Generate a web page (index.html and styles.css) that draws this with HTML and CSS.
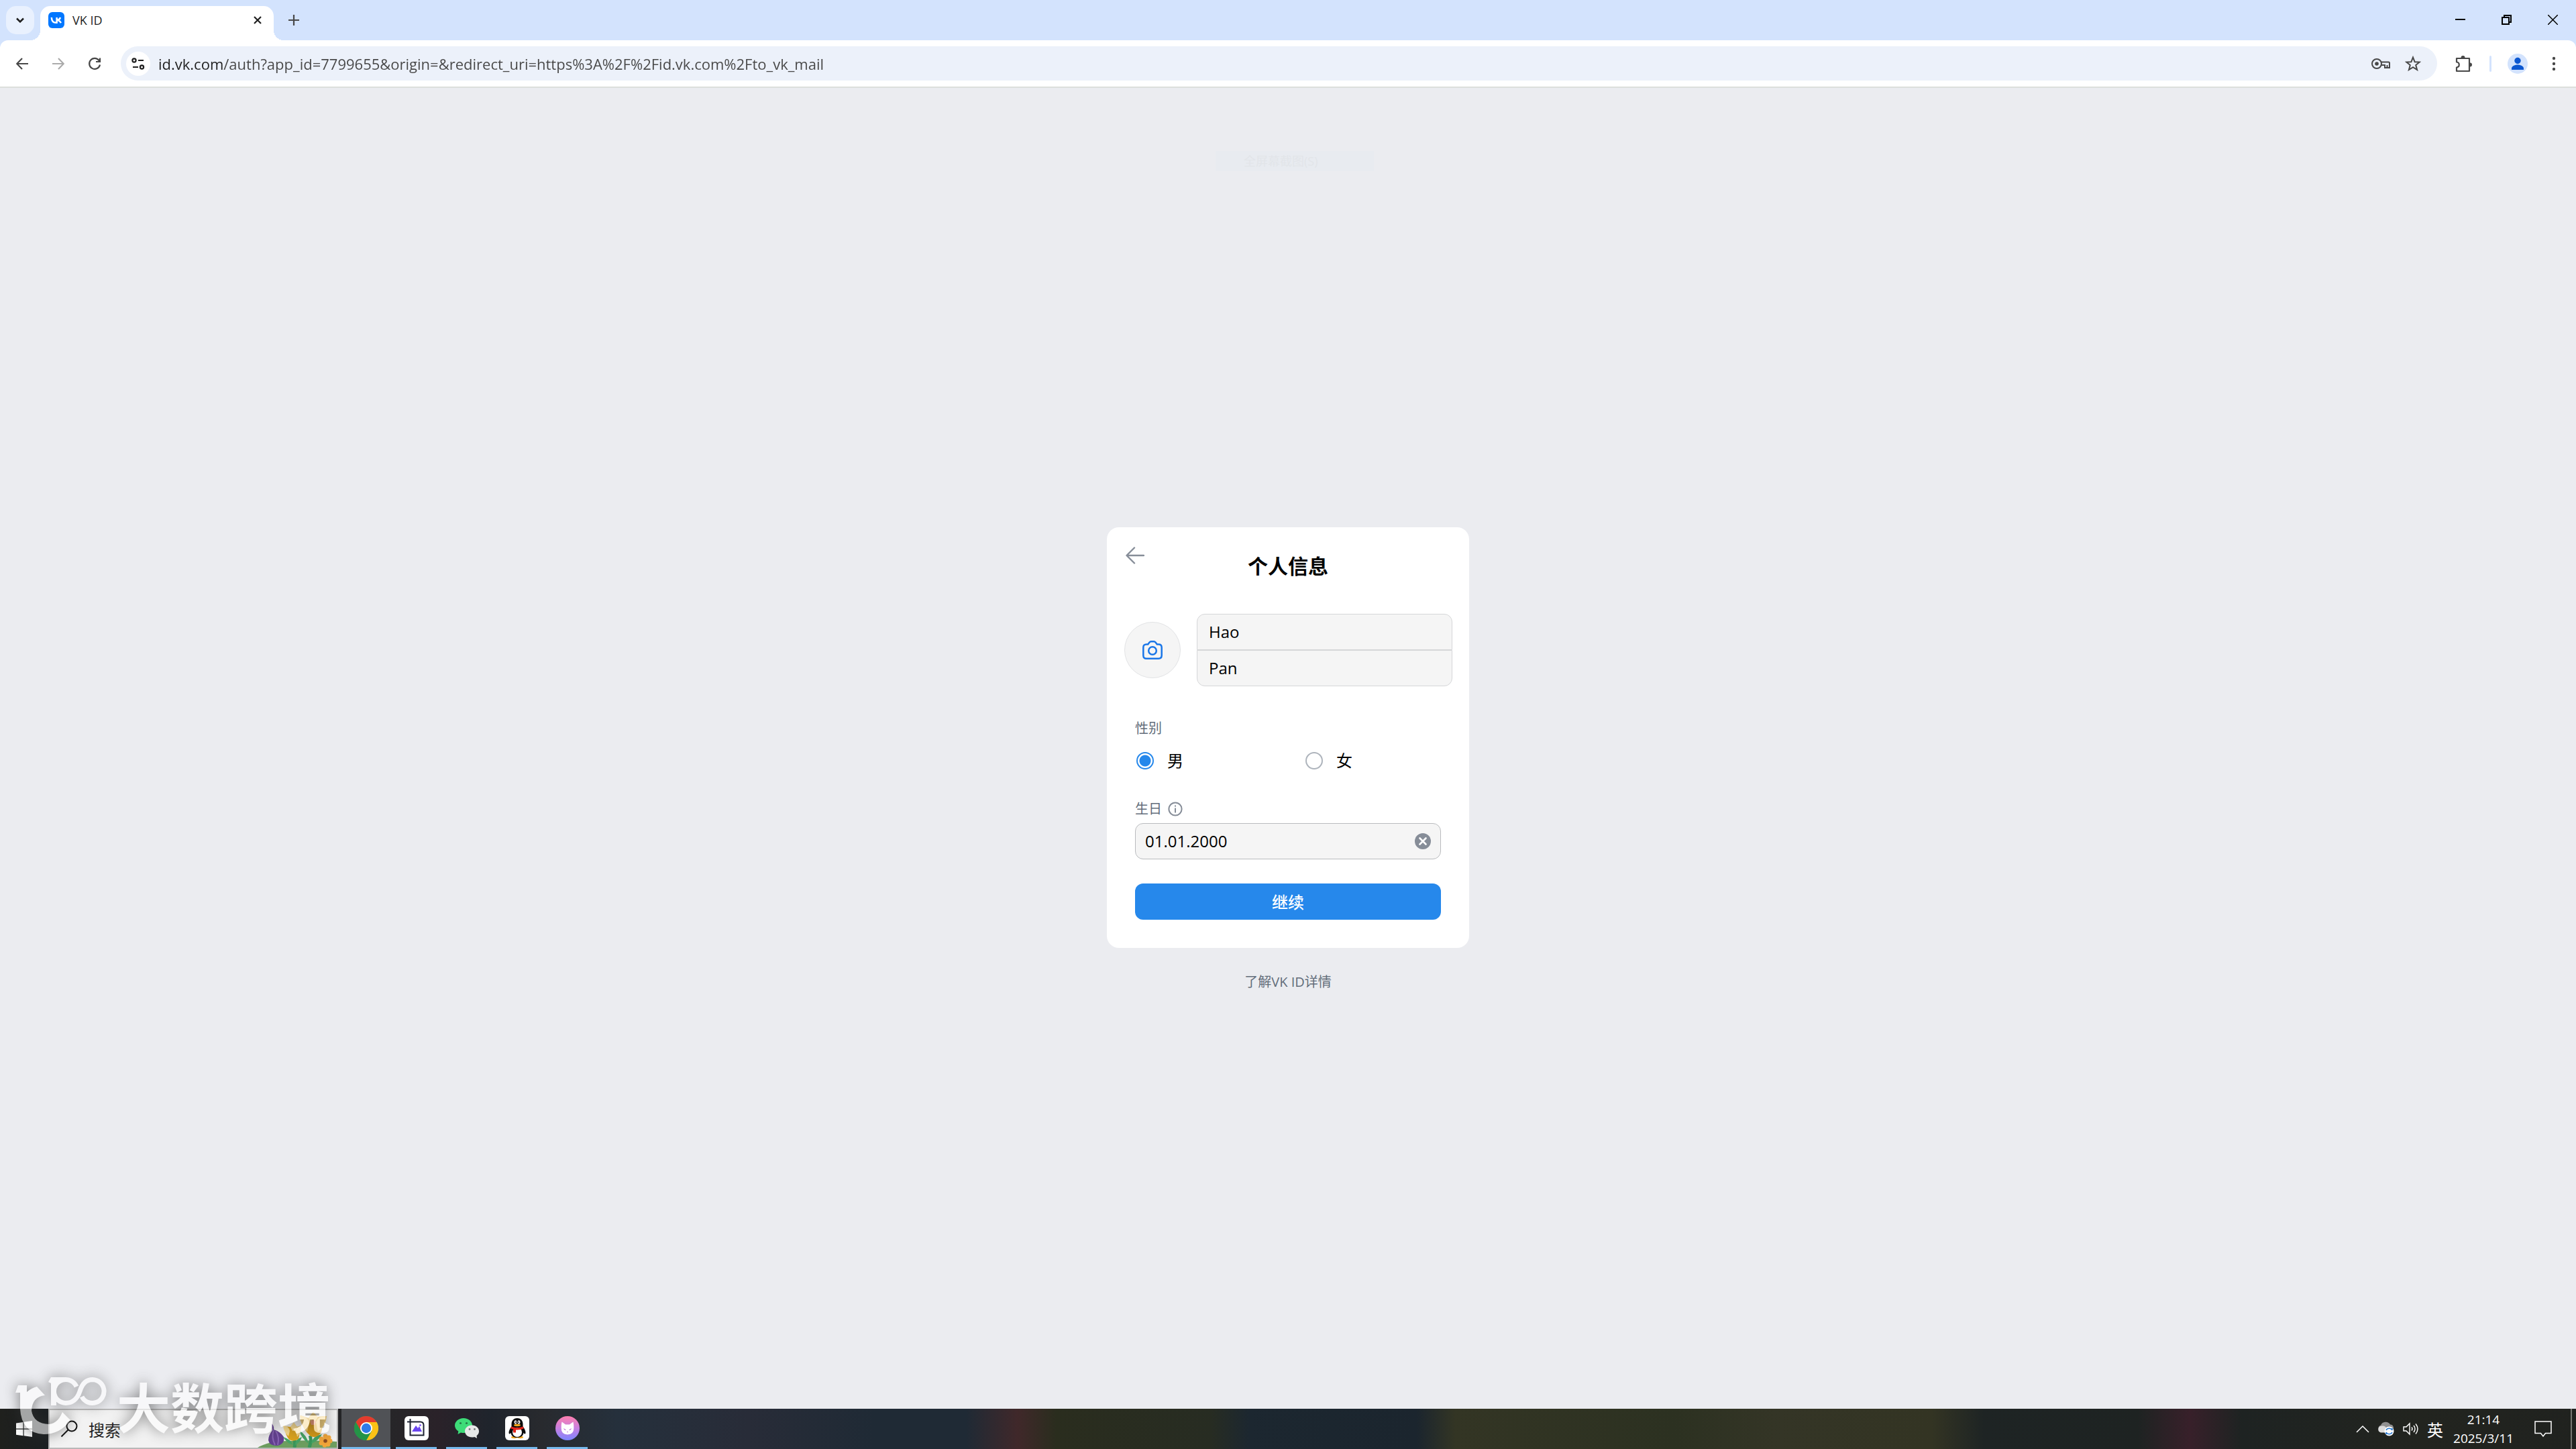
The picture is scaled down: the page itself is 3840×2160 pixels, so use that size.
FILE: index.html
```html
<!DOCTYPE html>
<html lang="zh-CN">

<head>
    <meta charset="UTF-8">
    <meta name="viewport" content="width=device-width, initial-scale=1.0">
    <title>VK ID</title>

    <link rel="stylesheet" href="styles.css">
</head>

<body>
    <!-- browser window -->
    <header class="browser">
        <div class="tabstrip">
            <button class="tab-search" aria-label="搜索标签页">
                <svg width="18" height="18" viewBox="0 0 18 18"><path d="M4 6.500l5 5 5-5" fill="none" stroke="#1f1f1f" stroke-width="2.500"/></svg>
            </button>
            <div class="tab">
                <svg class="favicon" width="24" height="24" viewBox="0 0 24 24">
                    <rect width="24" height="24" rx="6" fill="#07f"/>
                    <path d="M4.800 8c.2 4.800 2.700 7.800 6.600 7.800h1.200V8M12.600 12c3-.2 4.700-1.800 5.400-4M12.600 12c3.200.2 5.200 1.700 6.200 4.300" fill="none" stroke="#fff" stroke-width="2.500"/>
                </svg>
                <span class="tab-title">VK ID</span>
                <button class="icon-btn tab-close" aria-label="关闭">
                    <svg width="18" height="18" viewBox="0 0 18 18"><path d="M4 4l10 10M14 4L4 14" stroke="#1f1f1f" stroke-width="2.200"/></svg>
                </button>
            </div>
            <button class="icon-btn new-tab" aria-label="新标签页">
                <svg width="18" height="18" viewBox="0 0 18 18"><path d="M9 1v16M1 9h16" stroke="#474747" stroke-width="2.200"/></svg>
            </button>
            <div class="window-controls">
                <button class="win-btn" aria-label="最小化"><svg width="15" height="15" viewBox="0 0 15 15"><path d="M0 7h15" stroke="#000" stroke-width="2"/></svg></button>
                <button class="win-btn" aria-label="还原"><svg width="15" height="15" viewBox="0 0 15 15"><path d="M1 4h10v10H1zM4 4V1h10v10h-3" fill="none" stroke="#000" stroke-width="2"/></svg></button>
                <button class="win-btn" aria-label="关闭窗口"><svg width="15" height="15" viewBox="0 0 15 15"><path d="M0 0l15 15M15 0L0 15" stroke="#000" stroke-width="1.500"/></svg></button>
            </div>
        </div>

        <div class="toolbar">
            <button class="icon-btn" aria-label="后退">
                <svg width="18" height="18" viewBox="0 0 18 18"><path d="M18 9H1.500M9 1L1.200 9 9 17" fill="none" stroke="#474747" stroke-width="2.200"/></svg>
            </button>
            <button class="icon-btn" aria-label="前进" disabled>
                <svg width="18" height="18" viewBox="0 0 18 18"><path d="M0 9h16.500M9 1l7.800 8L9 17" fill="none" stroke="#ababab" stroke-width="2.200"/></svg>
            </button>
            <button class="icon-btn" aria-label="重新加载">
                <svg width="20" height="20" viewBox="0 0 20 20"><path d="M18 11.500A8 8 0 1 1 16.500 5L18 7M18 1.500V7h-6" fill="none" stroke="#474747" stroke-width="2.200"/></svg>
            </button>
            <form class="omnibox">
                <button type="button" class="site-info" aria-label="查看网站信息">
                    <svg width="20" height="20" viewBox="0 0 20 20" fill="none" stroke="#1f1f1f" stroke-width="2.200"><circle cx="4" cy="5" r="2.600"/><path d="M10 5h8M2 15h8"/><circle cx="15.500" cy="15" r="2.600"/></svg>
                </button>
                <input class="url" type="text" aria-label="地址" value="id.vk.com/auth?app_id=7799655&amp;origin=&amp;redirect_uri=https%3A%2F%2Fid.vk.com%2Fto_vk_mail">
                <button type="button" class="icon-btn omni-btn" aria-label="密码">
                    <svg width="28" height="18" viewBox="0 0 28 18" fill="none" stroke="#474747" stroke-width="2"><circle cx="8" cy="9" r="7"/><circle cx="8" cy="9" r="2.800" fill="#474747" stroke="none"/><path d="M14.500 6.500H25.500a1.500 1.500 0 0 1 1.500 1.500v7h-7v-4h-5.500M23.500 15v-4"/></svg>
                </button>
                <button type="button" class="icon-btn omni-btn" aria-label="收藏">
                    <svg width="24" height="24" viewBox="0 0 24 24"><path d="M12 2.500l2.600 6.700 7.100.4-5.500 4.500 1.900 7L12 17.200l-6.100 3.900 1.900-7L2.300 9.600l7.100-.4z" fill="none" stroke="#474747" stroke-width="2"/></svg>
                </button>
            </form>
            <button class="icon-btn extensions" aria-label="扩展程序">
                <svg width="26" height="26" viewBox="0 0 26 26"><path d="M3 5h19v19H3v-5.500c5-.5 5-7.500 0-8z" fill="none" stroke="#474747" stroke-width="2.200" stroke-linejoin="round"/><path d="M9.500 4a3 3 0 0 1 6 0zM23 11.500a3 3 0 0 1 0 6z" fill="#474747"/></svg>
            </button>
            <span class="separator"></span>
            <button class="icon-btn" aria-label="个人资料">
                <svg width="30" height="30" viewBox="0 0 30 30"><circle cx="15" cy="15" r="15" fill="#d3e3fd"/><circle cx="15" cy="10.500" r="4.700" fill="#0b57d0"/><path d="M6 24v-2c0-4 6-5.500 9-5.500s9 1.500 9 5.500v2z" fill="#0b57d0"/></svg>
            </button>
            <button class="icon-btn" aria-label="菜单">
                <svg width="6" height="22" viewBox="0 0 6 22" fill="#474747"><circle cx="3" cy="3" r="2.200"/><circle cx="3" cy="11" r="2.200"/><circle cx="3" cy="19" r="2.200"/></svg>
            </button>
        </div>
    </header>

    <!-- page -->
    <main class="page">
        <div class="ghost-menu">全屏幕截图(S)</div>

        <form class="card">
            <div class="card-header">
                <button type="button" class="back" aria-label="返回">
                    <svg width="28" height="26" viewBox="0 0 28 26"><path d="M27 13H2M13 1.500L1.500 13 13 24.500" fill="none" stroke="#868d98" stroke-width="2.400" stroke-linecap="round" stroke-linejoin="round"/></svg>
                </button>
                <h1 class="card-title">个人信息</h1>
            </div>

            <div class="name-row">
                <button type="button" class="avatar" aria-label="上传照片">
                    <svg width="30" height="28" viewBox="0 0 30 28" fill="none" stroke="#1a76e8" stroke-width="2.500"><path d="M6 5.500h2.200L10.500 2.500q1-1.200 2.500-1.200h4q1.500 0 2.500 1.200l2.300 3H24q4.700 0 4.700 4.700v11.800q0 4.700-4.700 4.700H6q-4.700 0-4.700-4.700V10.200Q1.300 5.500 6 5.500z"/><circle cx="15" cy="15" r="5.800"/></svg>
                </button>
                <div class="name-fields">
                    <input class="field" type="text" aria-label="名" value="Hao">
                    <input class="field" type="text" aria-label="姓" value="Pan">
                </div>
            </div>

            <fieldset class="gender">
                <legend class="label">性别</legend>
                <div class="options">
                    <label class="option"><input class="radio" type="radio" name="sex" checked>男</label>
                    <label class="option"><input class="radio" type="radio" name="sex">女</label>
                </div>
            </fieldset>

            <div class="birthday">
                <div class="birthday-label">
                    <label class="label" for="bdate">生日</label>
                    <svg width="22" height="22" viewBox="0 0 22 22"><circle cx="11" cy="11" r="9.600" fill="none" stroke="#868d98" stroke-width="2"/><path d="M11 9.500v7M11 5.500v2" stroke="#868d98" stroke-width="2"/></svg>
                </div>
                <div class="date-box">
                    <input class="date-input" id="bdate" type="text" value="01.01.2000">
                    <button type="button" class="clear" aria-label="清除">
                        <svg width="24" height="24" viewBox="0 0 24 24"><circle cx="12" cy="12" r="12" fill="#868d98"/><path d="M7.500 7.500l9 9M16.500 7.500l-9 9" stroke="#fff" stroke-width="2.600" stroke-linecap="round"/></svg>
                    </button>
                </div>
            </div>

            <button type="submit" class="submit">继续</button>
        </form>

        <a class="about" href="#">了解VK ID详情</a>
    </main>

    <!-- windows taskbar -->
    <footer class="taskbar">
        <button class="start" aria-label="开始">
            <svg width="24" height="24" viewBox="0 0 24 24" fill="#fff"><path d="M0 3.500l10.500-1.500v9.500H0zM11.700 1.800L24 0v11.500H11.700zM0 12.700h10.500v9.500L0 20.700zM11.700 12.700H24V24l-12.300-1.700z"/></svg>
        </button>
        <label class="search">
            <svg width="26" height="26" viewBox="0 0 26 26" fill="none" stroke="#111" stroke-width="2"><circle cx="17" cy="9" r="7.500"/><path d="M11.500 14.500L1.500 24.500"/></svg>
            <input class="search-input" type="text" value="搜索">
            <svg class="flowers" width="120" height="56" viewBox="0 0 120 56">
                <path d="M2 56Q18 46 46 46 86 44 120 47V56z" fill="#6d9e5f"/>
                <path d="M23 20q4 4 3 9 10 3 15 11 2 10-9 13-12 1-14-8 0-7 6-15z" fill="#634090"/>
                <path d="M26 30q-4 10 2 22M29 31q6 9 3 21" fill="none" stroke="#8763b4" stroke-width="2"/>
                <path d="M57 56q1-6 0-12M79 56q4-12 1-18" fill="none" stroke="#38965a" stroke-width="5"/>
                <path d="M55 52q-10-3-15-12 11 3 15 12zM58 52q8-4 10-12-10 3-10 12zM78 50q-11-8-14-20 12 8 14 20zM82 50q12-5 16-14-14 2-16 14z" fill="#45a465"/>
                <path d="M42 24l9 1 5-5 5 5 6-2-4 20q-7 5-14 1-6-7-7-20z" fill="#dba31c"/>
                <path d="M40 23q8 0 10 8l-2 8q-7-6-8-16zM51 25l5-7 5 7-3 6h-4zM67 23q-7 1-8 8l2 9q6-6 6-17z" fill="#f7d98d"/>
                <path d="M66 8l12 4 6-8 7 6 11-1-5 24q-7 10-16 6Q68 28 66 8z" fill="#da9c14"/>
                <path d="M65 8q12 1 14 11l-3 13Q65 22 65 8zM78 11l7-8 7 7-4 7h-7zM105 9Q92 8 89 18l3 14q12-9 13-23z" fill="#f5d079"/>
                <path d="M80 17l4-3 5 3-2 5h-5z" fill="#f39a74"/>
                <g fill="#f2a63a"><circle cx="103" cy="39" r="3.500"/><circle cx="108" cy="41" r="3.500"/><circle cx="110" cy="46" r="3.500"/><circle cx="107" cy="51" r="3.500"/><circle cx="102" cy="52" r="3.500"/><circle cx="97" cy="49" r="3.500"/><circle cx="97" cy="43" r="3.500"/><circle cx="103" cy="46" r="5"/></g>
                <circle cx="103" cy="46" r="2.800" fill="#8c4b20"/>
            </svg>
        </label>
        <div class="apps">
            <button class="app active" aria-label="Chrome">
                <svg width="36" height="36" viewBox="0 0 36 36"><circle cx="18" cy="18" r="18" fill="#34a853"/><path d="M18 18L2.400 9A18 18 0 0 1 33.600 9z" fill="#e33b2e"/><path d="M18 9h15.600A18 18 0 0 1 18 36l7.800-13.500z" fill="#fbc116"/><path d="M2.400 9l7.800 13.500L18 18V9z" fill="#e33b2e"/><path d="M2.400 9A18 18 0 0 0 18 36l7.800-13.500L18 18l-7.800 4.500z" fill="#249447"/><circle cx="18" cy="18" r="9" fill="#fff"/><circle cx="18" cy="18" r="7.200" fill="#2f7be8"/></svg>
            </button>
            <button class="app" aria-label="截图">
                <svg width="36" height="36" viewBox="0 0 36 36"><rect width="36" height="36" rx="6" fill="#fff"/><path d="M8.500 4v24.500h20V13.500q0-5-5-5H4" fill="none" stroke="#1b2030" stroke-width="2"/><path d="M11 23l6-9 3 4 2-3 4 8z" fill="#6a45f0"/><circle cx="23.500" cy="13.500" r="1.500" fill="#8a63f5"/></svg>
            </button>
            <button class="app" aria-label="微信">
                <svg width="36" height="36" viewBox="0 0 36 36"><path d="M13 3c7.500 0 13 5 13 11S20.500 25 13 25q-2 0-4-.6L4.500 27l.8-4.500Q0 19 0 14C0 8 5.500 3 13 3z" fill="#3ddc78"/><path d="M25.500 13.500C31.500 13.500 36 17.500 36 22.500q0 4-3.500 6.800l.5 3.700-3.800-2q-1.700.5-3.700.5c-6 0-10.500-4-10.500-9s4.500-9 10.500-9z" fill="#e6e8e8"/><g fill="#247c48"><circle cx="8.500" cy="10.500" r="1.600"/><circle cx="17.500" cy="10.500" r="1.600"/></g><g fill="#767b7b"><circle cx="22" cy="19.500" r="1.400"/><circle cx="29.500" cy="19.500" r="1.400"/></g></svg>
            </button>
            <button class="app" aria-label="QQ">
                <svg width="36" height="36" viewBox="0 0 36 36"><rect width="36" height="36" rx="6" fill="#fff"/><ellipse cx="13.500" cy="31.500" rx="4.500" ry="1.700" fill="#f5a81c"/><ellipse cx="22.500" cy="31.500" rx="4.500" ry="1.700" fill="#f5a81c"/><path d="M18 3c6 0 8.500 4.500 8.500 9v3.500q4 5 4 9.500-.5 3-3 0-1 7-9.500 7t-9.500-7q-2.500 3-3 0 0-4.500 4-9.500V12c0-4.500 2.500-9 8.500-9z" fill="#0b0b0b"/><ellipse cx="18" cy="24" rx="7" ry="7" fill="#fff"/><ellipse cx="15.500" cy="9" rx="2" ry="2.700" fill="#fff"/><ellipse cx="20.500" cy="9" rx="2" ry="2.700" fill="#fff"/><circle cx="16" cy="9" r=".9"/><circle cx="20" cy="9" r=".9"/><ellipse cx="18" cy="13.500" rx="5" ry="1.700" fill="#f5a81c"/><path d="M9 15.500q9 3.500 18 0l.7 3q-5 2.500-11.700 2v4h-4v-5l-3.700-1z" fill="#e2231a"/></svg>
            </button>
            <button class="app" aria-label="Clash">
                <svg width="36" height="36" viewBox="0 0 36 36"><defs><linearGradient id="cat" x2="0" y2="1"><stop offset="0" stop-color="#ff7fae"/><stop offset=".5" stop-color="#c77fe0"/><stop offset="1" stop-color="#7d86ff"/></linearGradient></defs><circle cx="18" cy="18" r="18" fill="url(#cat)"/><path d="M9.500 8.500l5.500 4h6l5.500-4q1 4 .8 9.500.2 9-9.300 9.500Q8.500 27 8.700 18q-.2-5.500.8-9.500z" fill="#fff"/><path d="M12 18l4 2.500q-3 1.500-4-2.500zM24 18l-4 2.500q3 1.500 4-2.500zM16.800 23h2.400L18 24.500z" fill="#c06fd8"/></svg>
            </button>
        </div>
        <div class="tray">
            <svg width="20" height="12" viewBox="0 0 20 12"><path d="M1 11l9-9 9 9" fill="none" stroke="#fff" stroke-width="1.500"/></svg>
            <svg width="26" height="22" viewBox="0 0 26 22"><path d="M5 15a5 5 0 0 1 0-9.500 8 8 0 0 1 14-1 5 5 0 0 1 3 9z" fill="#909090"/><path d="M5 16.500a5 5 0 0 1 .5-9.800q6-1.500 8.500 4l1 5.800z" fill="#dcdcdc"/><circle cx="17.500" cy="14.500" r="7" fill="#fff"/><path d="M13 13a5 5 0 0 1 9 0v-3M22 16a5 5 0 0 1-9 0v3" fill="none" stroke="#2b7cd3" stroke-width="1.600"/></svg>
            <svg width="24" height="20" viewBox="0 0 24 20" fill="none" stroke="#fff" stroke-width="1.400"><path d="M1 7v6h4l5 5V2L5 7z"/><path d="M13 7.500q2 2.500 0 5"/><path d="M16 5q4 5 0 10"/><path d="M19 2.500q6 7.500 0 15"/></svg>
            <span class="ime">英</span>
            <div class="clock">
                <span>21:14</span>
                <span>2025/3/11</span>
            </div>
            <svg class="notify" width="26" height="26" viewBox="0 0 26 26"><path d="M1 2h24v17.500h-8.500L13 24l-3.500-4.500H1z" fill="none" stroke="#fff" stroke-width="1.500"/></svg>
            <span class="peek"></span>
        </div>
    </footer>

    <!-- watermark over the corner -->
    <div class="watermark">
        <svg width="138" height="90" viewBox="0 0 138 90">
            <path d="M1 24L5 13H18V23Q25 17 33 15L45 28Q26 30 25 51 28 70 51 71 64 70 71 53L83 65Q68 86 43 86 10 84 8 48V24z" fill="#fff"/>
            <path d="M50 8L54 1H76V8H62V43H54V10z" fill="#fff"/>
            <path d="M92 15A17.500 17.500 0 1 0 76 39.500C88 39.500 94 31 97 22 100 12 106 4.500 116 4.500A17.500 17.500 0 1 1 100 30" fill="none" stroke="#fff" stroke-width="7"/>
        </svg>
        <span class="watermark-text">大数跨境</span>
    </div>
</body>

</html>
```

FILE: styles.css
```css
* {
    box-sizing: border-box;
}

body {
    margin: 0;
    min-height: 100vh;
    display: flex;
    flex-direction: column;
    position: relative;
    font-family: "Open Sans", "Noto Sans CJK SC", sans-serif;
    font-size: 20px;
    color: #000;
    overflow: hidden;
}

button,
input {
    font: inherit;
    color: inherit;
    margin: 0;
}

button {
    padding: 0;
    border: 0;
    background: none;
    display: flex;
    align-items: center;
    justify-content: center;
    flex: none;
}

svg {
    display: block;
    flex: none;
}

/* Browser */

.browser {
    background: #d3e3fd;
}

.tabstrip {
    display: flex;
    align-items: flex-start;
    height: 60px;
    padding: 9px 0 0 9px;
}

.tab-search {
    width: 42px;
    height: 42px;
    border-radius: 15px;
    background: #e9f1fe;
}

.tab {
    position: relative;
    display: flex;
    align-items: center;
    width: 348px;
    height: 51px;
    margin-left: 9px;
    padding: 0 12px 9px;
    border-radius: 15px 15px 0 0;
    background: #fff;
}

.tab::before,
.tab::after {
    content: "";
    position: absolute;
    bottom: 0;
    width: 15px;
    height: 15px;
}

.tab::before {
    right: 100%;
    background: radial-gradient(circle at 0 0, transparent 15px, #fff 15px);
}

.tab::after {
    left: 100%;
    background: radial-gradient(circle at 100% 0, transparent 15px, #fff 15px);
}

.tab-title {
    flex: 1;
    margin-left: 12px;
    font-size: 18px;
    color: #1f1f1f;
}

.icon-btn {
    width: 54px;
    height: 42px;
}

.tab-close {
    width: 24px;
}

.new-tab {
    width: 60px;
}

.window-controls {
    display: flex;
    margin-left: auto;
}

.win-btn {
    width: 69px;
    height: 40px;
}

.toolbar {
    display: flex;
    align-items: center;
    height: 71px;
    padding: 0 6px;
    border-radius: 12px 12px 0 0;
    border-bottom: 2px solid #dcdfdc;
    background: #fff;
}

.omnibox {
    flex: 1;
    display: flex;
    align-items: center;
    height: 51px;
    margin: 0 12px;
    padding: 0 12px 0 8px;
    border-radius: 26px;
    background: #ecf1fa;
}

.site-info {
    width: 36px;
    height: 36px;
    border-radius: 50%;
    background: #fff;
}

.url {
    flex: 1;
    height: 40px;
    padding: 0;
    margin-left: 12px;
    border: 0;
    outline: 0;
    font-size: 22px;
    /* host part is darker than the path */
    color: transparent;
    background: linear-gradient(to right, #1f1f1f 96px, #474747 96px);
    -webkit-background-clip: text;
    background-clip: text;
}

.omni-btn {
    width: 48px;
}

.separator {
    width: 3px;
    height: 24px;
    margin: 0 12px;
    border-radius: 2px;
    background: #d3e3fd;
}

/* Page */

.page {
    flex: 1;
    display: flex;
    flex-direction: column;
    align-items: center;
    justify-content: center;
    gap: 36px;
    padding-top: 33px;
    background: #ebecf0;
    position: relative;
}

.ghost-menu {
    position: absolute;
    top: 94px;
    left: calc(50% - 108px);
    width: 236px;
    padding-left: 42px;
    font-size: 18px;
    line-height: 30px;
    color: #e2e5e9;
    background: #e8ebf0;
}

.card {
    width: 540px;
    padding: 24px 0 42px;
    border-radius: 18px;
    background: #fff;
}

.card-header {
    display: grid;
    grid-template-columns: 36px 1fr 36px;
    padding: 0 24px;
}

.back {
    width: 36px;
    height: 36px;
}

.card-title {
    margin: 0;
    padding-top: 12px;
    font-size: 30px;
    line-height: 44px;
    font-weight: 700;
    text-align: center;
}

.name-row {
    display: flex;
    align-items: center;
    gap: 24px;
    margin-top: 49px;
    padding: 0 25px 0 26px;
}

.avatar {
    width: 84px;
    height: 84px;
    border: 1px solid #e2e3e5;
    border-radius: 50%;
    background: #f5f5f5;
}

.name-fields {
    flex: 1;
}

.field {
    display: block;
    width: 100%;
    height: 54px;
    padding: 0 17px;
    border: 1px solid #d5d6d8;
    border-radius: 12px 12px 0 0;
    outline: 0;
    font-size: 24px;
    background: #f5f5f5;
}

.field + .field {
    border-radius: 0 0 12px 12px;
}

.gender {
    margin: 48px 42px 0;
    padding: 0;
    border: 0;
}

.label {
    padding: 0;
    font-size: 20px;
    line-height: 30px;
    color: #626d7a;
}

.options {
    display: grid;
    grid-template-columns: 1fr 1fr;
    gap: 48px;
    margin-top: 15px;
}

.option {
    display: flex;
    align-items: center;
    gap: 20px;
    padding-left: 2px;
    font-size: 24px;
    line-height: 36px;
}

.radio {
    appearance: none;
    width: 26px;
    height: 26px;
    border: 2px solid #aeb4bc;
    border-radius: 50%;
}

.radio:checked {
    border-color: #2688eb;
    background: radial-gradient(circle, #2688eb 8px, #fff 9px);
}

.birthday {
    margin: 39px 42px 0;
}

.birthday-label {
    display: flex;
    align-items: center;
    gap: 9px;
    height: 30px;
}

.date-box {
    display: flex;
    align-items: center;
    height: 54px;
    margin-top: 6px;
    padding: 0 14px;
    border: 1px solid #b9bbbe;
    border-radius: 12px;
    background: #f5f5f5;
}

.date-input {
    flex: 1;
    padding: 0;
    border: 0;
    outline: 0;
    font-size: 24px;
    background: none;
}

.submit {
    width: calc(100% - 84px);
    height: 54px;
    margin: 36px 42px 0;
    border-radius: 12px;
    font-size: 24px;
    font-weight: 500;
    color: #fff;
    background: #2688eb;
}

.about {
    font-size: 20px;
    line-height: 30px;
    color: #626d7a;
    text-decoration: none;
}

/* Taskbar */

.taskbar {
    display: flex;
    height: 60px;
    color: #fff;
    background: linear-gradient(to right,
        #1f201d 0, #1b1f22 2%, #262628 15%, #2a2229 17%, #1f242c 19%, #282a2e 21%,
        #25303c 24%, #282c38 29%, #1f2a35 34%, #1f2a35 37.500%, #40282a 39.500%,
        #2a2d1e 41%, #272c22 47%, #1c2730 48.500%, #1b252e 55%, #333524 56.500%,
        #2c3121 65%, #343526 69%, #333423 75%, #1e2424 77%, #1e2322 83%,
        #38202a 85%, #1e2322 87%, #22241f 94%, #20221f 100%);
}

.start {
    width: 72px;
}

.search {
    display: flex;
    align-items: center;
    width: 432px;
    padding-left: 16px;
    border: 2px solid #b8b8b8;
    color: #222;
    background: #f2f2f2;
}

.search-input {
    flex: 1;
    min-width: 0;
    padding: 0;
    margin-left: 16px;
    border: 0;
    outline: 0;
    font-size: 24px;
    background: none;
}

.apps {
    display: flex;
    gap: 14px;
    margin-left: 5px;
}

.app {
    width: 61px;
    border-bottom: 3px solid #76b9ed;
}

.app.active {
    width: 73px;
    margin-right: -6px;
    background: #505256;
}

.tray {
    display: flex;
    align-items: center;
    gap: 12px;
    margin-left: auto;
}

.ime {
    font-size: 24px;
}

.clock {
    display: flex;
    flex-direction: column;
    align-items: center;
    padding: 0 3px;
    font-size: 19px;
    line-height: 28px;
}

.notify {
    margin: 0 16px;
}

.peek {
    width: 8px;
    height: 60px;
    border-left: 2px solid #777873;
}

.watermark {
    position: absolute;
    left: 22px;
    bottom: 18px;
    display: flex;
    align-items: flex-end;
    gap: 14px;
    opacity: 0.6;
    filter: drop-shadow(0 0 10px #333);
    pointer-events: none;
}

.watermark-text {
    font-size: 80px;
    line-height: 88px;
    font-weight: 700;
    color: #fff;
}
```
